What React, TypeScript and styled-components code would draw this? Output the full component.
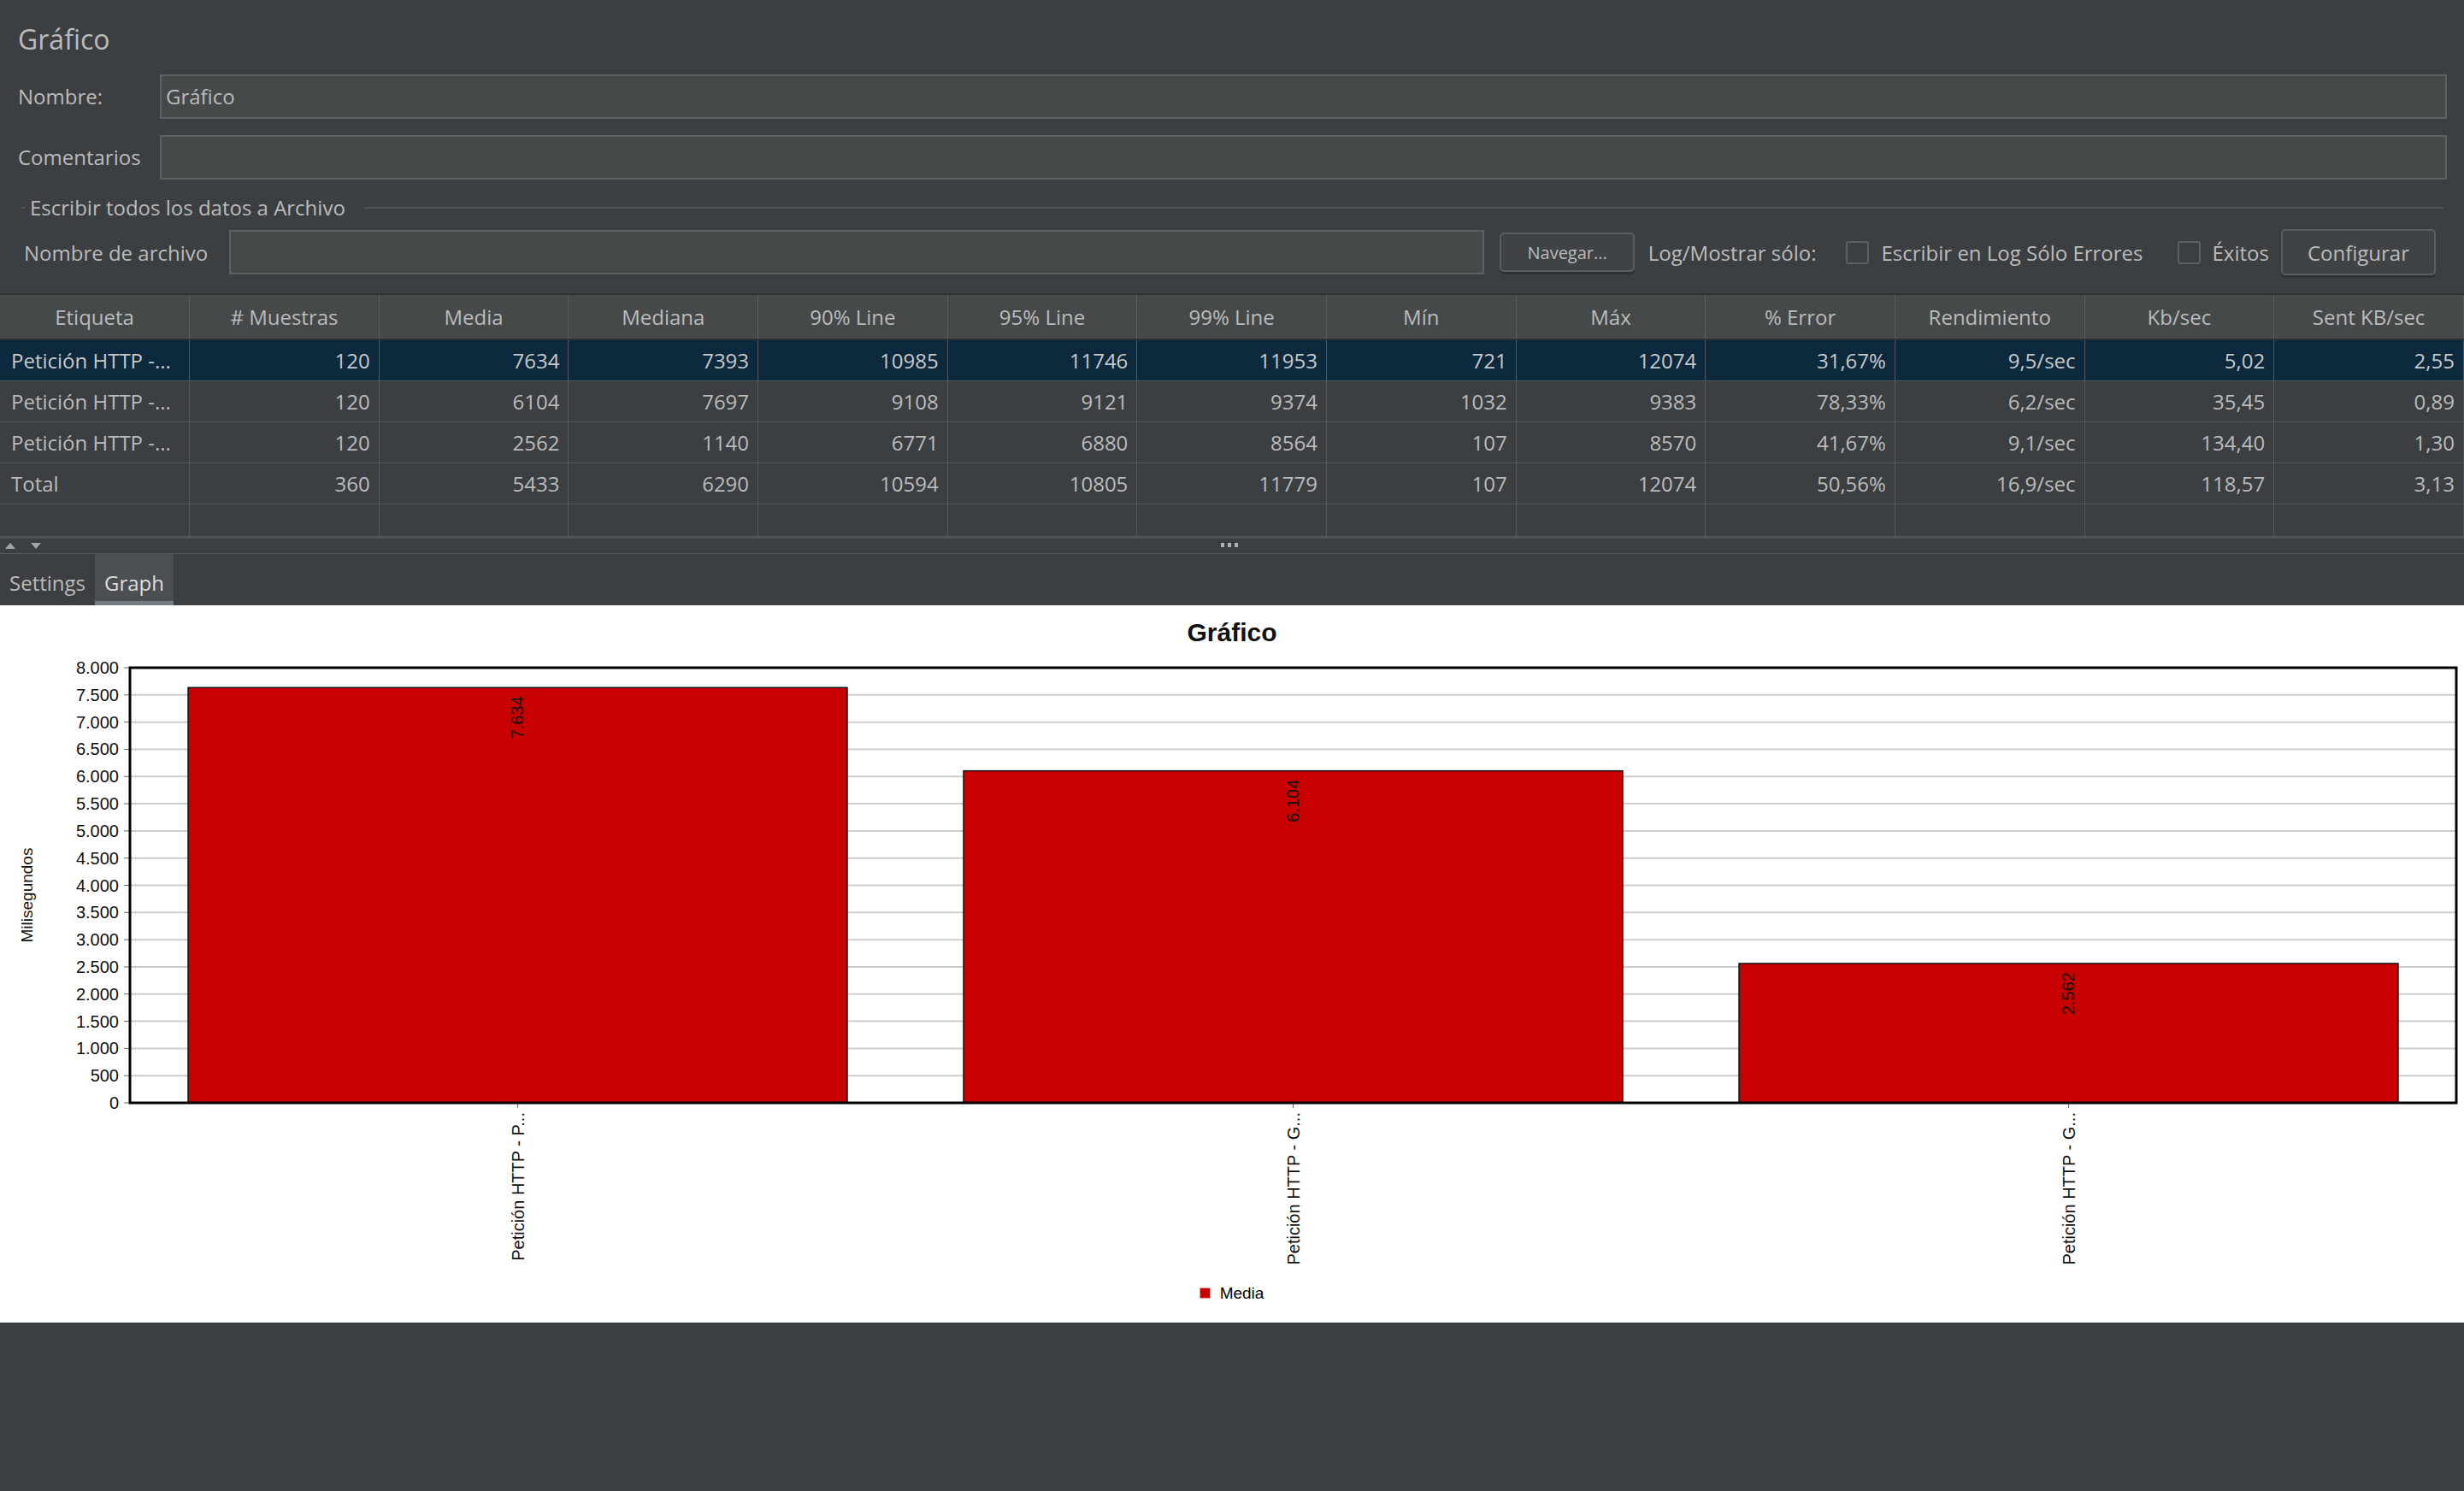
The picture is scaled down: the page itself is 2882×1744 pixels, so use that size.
import React from "react";
import styled, { createGlobalStyle } from "styled-components";

const GlobalStyle = createGlobalStyle`
  html, body {
    margin: 0;
    padding: 0;
    background: #3c3f41;
  }
  body {
    font-family: "Open Sans", "Noto Sans", sans-serif;
    color: #bbbbbb;
  }
  * {
    box-sizing: border-box;
  }
`;

const Ventana = styled.div`
  width: 2882px;
  min-height: 1744px;
  background: #3c3f41;
  display: flex;
  flex-direction: column;
`;

const Titulo = styled.h1`
  margin: 0;
  padding: 26px 0 0 21px;
  font-size: 32px;
  line-height: 40px;
  font-weight: 400;
  color: #bbbbbb;
`;

const Formulario = styled.div`
  display: grid;
  grid-template-columns: 166px 1fr;
  row-gap: 19px;
  align-items: center;
  padding: 21px 20px 0 21px;
`;

const Etiqueta = styled.label`
  font-size: 24px;
  line-height: 32px;
  white-space: nowrap;
`;

const Campo = styled.div<{ $flex?: boolean }>`
  height: 52px;
  background: #45494a;
  border: 2px solid #5e6161;
  padding: 0 5px;
  font-size: 24px;
  line-height: 48px;
  color: #bbbbbb;
  ${(p) => (p.$flex ? "flex: 1;" : "")}
`;

const Grupo = styled.div`
  margin-top: 17px;
`;

const Leyenda = styled.div`
  display: flex;
  align-items: center;
  height: 32px;
  padding: 0 24px 0 25px;
  font-size: 24px;
  line-height: 32px;

  &::before {
    content: "";
    width: 4px;
    height: 2px;
    background: #55585a;
    margin-right: 6px;
  }
  &::after {
    content: "";
    flex: 1;
    height: 2px;
    background: #505355;
    margin-left: 22px;
  }
`;

const FilaArchivo = styled.div`
  display: flex;
  align-items: center;
  height: 54px;
  margin-top: 9px;
  padding: 0 33px 0 28px;
  font-size: 24px;
  white-space: nowrap;
`;

const Boton = styled.button<{ $chico?: boolean }>`
  font-family: inherit;
  color: #bbbbbb;
  background: #404345;
  border: 2px solid #5b5e60;
  border-radius: 5px;
  box-shadow: 0 3px 0 #2f3133;
  height: ${(p) => (p.$chico ? "46px" : "54px")};
  padding: ${(p) => (p.$chico ? "0 30px" : "0 29px")};
  font-size: ${(p) => (p.$chico ? "20px" : "24px")};
  margin-left: ${(p) => (p.$chico ? "18px" : "14px")};
`;

const Texto = styled.span<{ $ml?: number }>`
  margin-left: ${(p) => p.$ml ?? 0}px;
`;

const Casilla = styled.span<{ $ml?: number }>`
  display: inline-block;
  width: 27px;
  height: 27px;
  border: 2px solid #5d6062;
  border-radius: 3px;
  margin-left: ${(p) => p.$ml ?? 0}px;
  margin-right: 14px;
`;

const Tabla = styled.table`
  width: 100%;
  margin-top: 21px;
  table-layout: fixed;
  border-collapse: collapse;
  border-top: 2px solid #2e3032;
  font-size: 24px;
`;

const Th = styled.th`
  height: 53px;
  padding: 0;
  background: #45494a;
  font-weight: 400;
  color: #bbbbbb;
  border-right: 1px solid #5a5d5f;
  border-bottom: 2px solid #2e3032;
  white-space: nowrap;
`;

const Fila = styled.tr<{ $sel?: boolean }>`
  background: ${(p) => (p.$sel ? "#0d293e" : "#3c3f41")};
  color: ${(p) => (p.$sel ? "#c8c8c8" : "#bbbbbb")};
`;

const Td = styled.td<{ $izq?: boolean; $vacia?: boolean }>`
  height: ${(p) => (p.$vacia ? "38px" : "48px")};
  padding: ${(p) => (p.$izq ? "0 0 0 13px" : "0 10px 0 0")};
  text-align: ${(p) => (p.$izq ? "left" : "right")};
  border-right: 1px solid #55585a;
  border-bottom: 1px solid #55585a;
  white-space: nowrap;
  overflow: hidden;
`;

const Divisor = styled.div`
  height: 20px;
  border-top: 2px solid #4f5254;
  border-bottom: 1px solid #55585a;
  display: flex;
  align-items: center;
  position: relative;
  padding-left: 6px;
  gap: 18px;
`;

const Flecha = styled.span<{ $abajo?: boolean }>`
  width: 0;
  height: 0;
  border-left: 6px solid transparent;
  border-right: 6px solid transparent;
  ${(p) => (p.$abajo ? "border-top: 7px solid #a5a5a5;" : "border-bottom: 7px solid #a5a5a5;")}
`;

const Agarre = styled.span`
  position: absolute;
  left: 1428px;
  top: 5px;
  display: flex;
  gap: 4px;

  & > i {
    width: 4px;
    height: 5px;
    background: #b0b0b0;
  }
`;

const Pestanas = styled.div`
  display: flex;
  height: 60px;
  font-size: 24px;
  line-height: 32px;
`;

const Pestana = styled.div<{ $activa?: boolean }>`
  padding: 18px 11px 0 11px;
  background: ${(p) => (p.$activa ? "#4b4f52" : "transparent")};
  color: ${(p) => (p.$activa ? "#dcdcdc" : "#bbbbbb")};
  border-bottom: 5px solid ${(p) => (p.$activa ? "#767b80" : "transparent")};
`;

const PanelGrafico = styled.div`
  height: 839px;
  background: #ffffff;
  display: flex;
  flex-direction: column;
  align-items: center;
  font-family: "Liberation Sans", Arial, sans-serif;
  color: #000;
`;

const TituloGrafico = styled.div`
  margin-top: 14px;
  height: 36px;
  font-size: 30px;
  line-height: 36px;
  font-weight: 700;
  color: #111;
`;

const Lienzo = styled.svg`
  display: block;
  margin-top: 3px;
  flex: none;
`;

const LeyendaGrafico = styled.div`
  display: flex;
  align-items: center;
  gap: 12px;
  margin-top: 10px;
  font-size: 19px;
  line-height: 24px;
`;

const Muestra = styled.span`
  width: 11px;
  height: 11px;
  background: #c80000;
  box-shadow: 0 0 0 1px #e8a0a0;
`;

const Relleno = styled.div`
  flex: 1;
  background: #3c3f41;
`;

const columnas = [
  "Etiqueta",
  "# Muestras",
  "Media",
  "Mediana",
  "90% Line",
  "95% Line",
  "99% Line",
  "Mín",
  "Máx",
  "% Error",
  "Rendimiento",
  "Kb/sec",
  "Sent KB/sec",
];

const filas = [
  ["Petición HTTP -...", "120", "7634", "7393", "10985", "11746", "11953", "721", "12074", "31,67%", "9,5/sec", "5,02", "2,55"],
  ["Petición HTTP -...", "120", "6104", "7697", "9108", "9121", "9374", "1032", "9383", "78,33%", "6,2/sec", "35,45", "0,89"],
  ["Petición HTTP -...", "120", "2562", "1140", "6771", "6880", "8564", "107", "8570", "41,67%", "9,1/sec", "134,40", "1,30"],
  ["Total", "360", "5433", "6290", "10594", "10805", "11779", "107", "12074", "50,56%", "16,9/sec", "118,57", "3,13"],
];

const barras = [
  { etiqueta: "Petición HTTP - P...", valor: 7634 },
  { etiqueta: "Petición HTTP - G...", valor: 6104 },
  { etiqueta: "Petición HTTP - G...", valor: 2562 },
];

const miles = (n: number) =>
  n >= 1000 ? `${Math.floor(n / 1000)}.${String(n % 1000).padStart(3, "0")}` : String(n);

const Grafico = () => {
  const W = 2882;
  const H = 730;
  const izq = 152;
  const der = 2873;
  const arriba = 20;
  const abajo = 529;
  const max = 8000;
  const ancho = der - izq;
  const margen = ancho * 0.025;
  const hueco = (ancho * 0.1) / (barras.length - 1);
  const anchoBarra = (ancho - 2 * margen - hueco * (barras.length - 1)) / barras.length;
  const y = (v: number) => abajo - (v / max) * (abajo - arriba);
  const marcas = Array.from({ length: 17 }, (_, i) => i * 500);

  return (
    <Lienzo width={W} height={H} viewBox={`0 0 ${W} ${H}`}>
      {marcas.slice(1, -1).map((v) => (
        <line key={v} x1={izq} x2={der} y1={y(v)} y2={y(v)} stroke="#cccccc" strokeWidth={2} />
      ))}
      {marcas.map((v) => (
        <g key={"m" + v}>
          <line x1={145} x2={izq} y1={y(v)} y2={y(v)} stroke="#666" strokeWidth={1} />
          <text
            x={139}
            y={y(v)}
            textAnchor="end"
            dominantBaseline="central"
            fontSize={20}
            fill="#111"
          >
            {miles(v)}
          </text>
        </g>
      ))}
      <text
        x={31}
        y={286}
        transform="rotate(-90 31 286)"
        textAnchor="middle"
        dominantBaseline="central"
        fontSize={19}
        fill="#111"
      >
        Milisegundos
      </text>
      {barras.map((b, i) => {
        const x = izq + margen + i * (anchoBarra + hueco);
        const cx = x + anchoBarra / 2;
        const top = y(b.valor);
        return (
          <g key={i}>
            <rect
              x={x}
              y={top}
              width={anchoBarra}
              height={abajo - top}
              fill="#c80000"
              stroke="#111"
              strokeWidth={1.5}
            />
            <text
              x={cx}
              y={top + 10}
              transform={`rotate(-90 ${cx} ${top + 10})`}
              textAnchor="end"
              dominantBaseline="central"
              fontSize={20}
              fill="#111"
            >
              {miles(b.valor)}
            </text>
            <line x1={cx} x2={cx} y1={abajo} y2={abajo + 6} stroke="#666" strokeWidth={1} />
            <text
              x={cx}
              y={abajo + 11}
              transform={`rotate(-90 ${cx} ${abajo + 11})`}
              textAnchor="end"
              dominantBaseline="central"
              fontSize={20}
              fill="#111"
            >
              {b.etiqueta}
            </text>
          </g>
        );
      })}
      <rect
        x={izq}
        y={arriba}
        width={ancho}
        height={abajo - arriba}
        fill="none"
        stroke="#000"
        strokeWidth={3}
      />
    </Lienzo>
  );
};

export default function App() {
  return (
    <>
      <GlobalStyle />
      <Ventana>
        <Titulo>Gráfico</Titulo>
        <Formulario>
          <Etiqueta>Nombre:</Etiqueta>
          <Campo>Gráfico</Campo>
          <Etiqueta>Comentarios</Etiqueta>
          <Campo />
        </Formulario>
        <Grupo>
          <Leyenda>Escribir todos los datos a Archivo</Leyenda>
          <FilaArchivo>
            <Texto>Nombre de archivo</Texto>
            <Campo $flex style={{ marginLeft: 25 }} />
            <Boton $chico>Navegar...</Boton>
            <Texto $ml={16}>Log/Mostrar sólo:</Texto>
            <Casilla $ml={35} />
            <Texto>Escribir en Log Sólo Errores</Texto>
            <Casilla $ml={40} />
            <Texto>Éxitos</Texto>
            <Boton>Configurar</Boton>
          </FilaArchivo>
        </Grupo>
        <Tabla>
          <thead>
            <tr>
              {columnas.map((c) => (
                <Th key={c}>{c}</Th>
              ))}
            </tr>
          </thead>
          <tbody>
            {filas.map((f, i) => (
              <Fila key={i} $sel={i === 0}>
                {f.map((v, j) => (
                  <Td key={j} $izq={j === 0}>
                    {v}
                  </Td>
                ))}
              </Fila>
            ))}
            <Fila>
              {columnas.map((c) => (
                <Td key={c} $vacia />
              ))}
            </Fila>
          </tbody>
        </Tabla>
        <Divisor>
          <Flecha />
          <Flecha $abajo />
          <Agarre>
            <i />
            <i />
            <i />
          </Agarre>
        </Divisor>
        <Pestanas>
          <Pestana>Settings</Pestana>
          <Pestana $activa>Graph</Pestana>
        </Pestanas>
        <PanelGrafico>
          <TituloGrafico>Gráfico</TituloGrafico>
          <Grafico />
          <LeyendaGrafico>
            <Muestra />
            Media
          </LeyendaGrafico>
        </PanelGrafico>
        <Relleno />
      </Ventana>
    </>
  );
}
